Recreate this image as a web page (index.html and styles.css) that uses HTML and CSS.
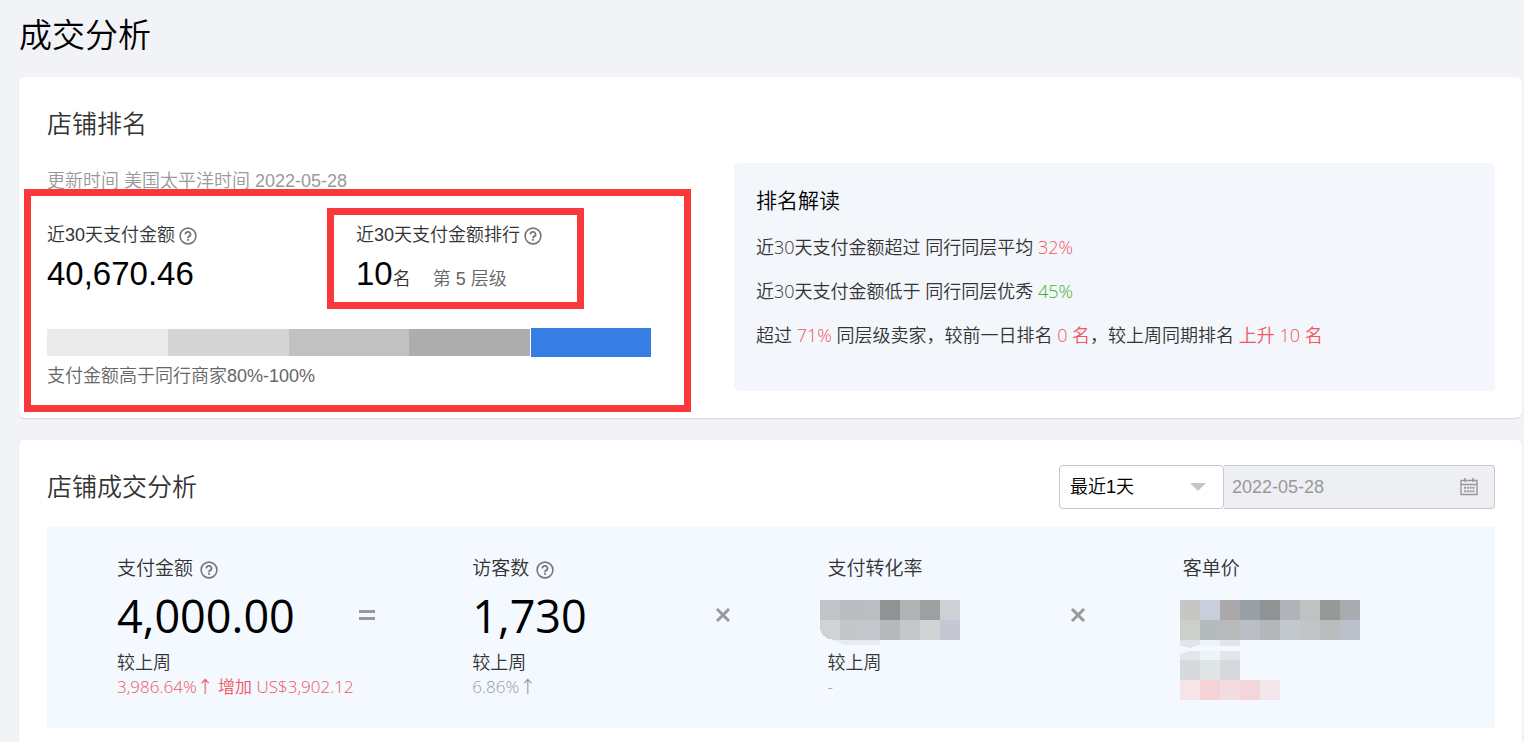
FILE: index.html
```html
<!DOCTYPE html>
<html lang="zh-CN">
<head>
  <meta charset="UTF-8">
  <meta name="viewport" content="width=device-width, initial-scale=1.0">
  <title>成交分析</title>
  <link rel="stylesheet" href="styles.css">
</head>
<body>
  <!-- Shared icon -->
  <svg class="sprite" aria-hidden="true">
    <symbol id="icon-help" viewBox="0 0 18 18">
      <circle cx="9" cy="9" r="7.9" fill="none" stroke="currentColor" stroke-width="1.6"/>
      <path d="M6.5 7.4a2.5 2.4 0 1 1 3.7 2C9.3 9.9 9 10.2 9 11.2" fill="none" stroke="currentColor" stroke-width="1.8"/>
      <rect x="8.1" y="12" width="1.8" height="1.8" fill="currentColor"/>
    </symbol>
  </svg>

  <h1 class="page-title">成交分析</h1>

  <!-- Shop ranking -->
  <section class="card ranking">
    <h2 class="card-title">店铺排名</h2>
    <div class="ranking-body">
      <div class="ranking-left">
        <p class="update-time">更新时间 美国太平洋时间 2022-05-28</p>
        <div class="rank-box">
          <div class="stats">
            <div class="stat">
              <div class="stat-label">近30天支付金额<svg class="help"><use href="#icon-help"/></svg></div>
              <div class="stat-value">40,670.46</div>
            </div>
            <div class="stat stat-marked">
              <div class="stat-label">近30天支付金额排行<svg class="help"><use href="#icon-help"/></svg></div>
              <div class="stat-value">10<span class="unit">名</span><span class="tier">第 5 层级</span></div>
            </div>
          </div>
          <div class="level-bar">
            <span class="level level-1"></span>
            <span class="level level-2"></span>
            <span class="level level-3"></span>
            <span class="level level-4"></span>
            <span class="level level-5"></span>
          </div>
          <p class="level-text">支付金额高于同行商家80%-100%</p>
        </div>
      </div>
      <div class="insight">
        <h3 class="insight-title">排名解读</h3>
        <p>近30天支付金额超过 同行同层平均 <span class="up">32%</span></p>
        <p>近30天支付金额低于 同行同层优秀 <span class="down">45%</span></p>
        <p>超过 <span class="up">71%</span> 同层级卖家，较前一日排名 <span class="up">0 名</span>，较上周同期排名 <span class="up">上升 10 名</span></p>
      </div>
    </div>
  </section>

  <!-- Shop transactions -->
  <section class="card deals">
    <div class="card-head">
      <h2 class="card-title">店铺成交分析</h2>
      <div class="filters">
        <div class="select-wrap">
          <select class="range" aria-label="统计周期">
            <option>最近1天</option>
          </select>
          <svg class="caret" viewBox="0 0 16 8"><path d="M0 0h16L8 8z" fill="#c4c6c8"/></svg>
        </div>
        <div class="date-wrap">
          <input class="date" type="text" value="2022-05-28" aria-label="统计日期" disabled>
          <svg class="calendar" viewBox="0 0 18 18" fill="none" stroke="#999">
            <path d="M1 2.5h16v14H1zM1 6.5h16" stroke-width="1.4"/>
            <path d="M5 0v4M13 0v4" stroke-width="1.6"/>
            <path d="M4 9.8h10.5M4 13.2h10.5" stroke-width="2" stroke-dasharray="2 0.8"/>
          </svg>
        </div>
      </div>
    </div>

    <div class="metrics">
      <div class="metric">
        <div class="metric-label">支付金额<svg class="help"><use href="#icon-help"/></svg></div>
        <div class="metric-value">4,000.00</div>
        <div class="metric-compare">较上周</div>
        <div class="metric-change up">3,986.64%↑ 增加 US$3,902.12</div>
        <svg class="operator" viewBox="0 0 18 18"><path d="M1 5.5h16M1 12.5h16"/></svg>
      </div>
      <div class="metric">
        <div class="metric-label">访客数<svg class="help"><use href="#icon-help"/></svg></div>
        <div class="metric-value">1,730</div>
        <div class="metric-compare">较上周</div>
        <div class="metric-change">6.86%↑</div>
        <svg class="operator" viewBox="0 0 18 18"><path d="M3 3l12 12M15 3L3 15"/></svg>
      </div>
      <div class="metric">
        <div class="metric-label">支付转化率</div>
        <div class="metric-value">
          <svg class="mosaic mosaic-rate" viewBox="0 0 140 45">
            <path d="M0 0h20v40h-6Q0 38 0 26z" fill="#cfd3d5"/>
            <path d="M0 0h20v20H0z" fill="#c1c4c6"/>
            <path d="M20 0h20v20H20z" fill="#b8bebf"/>
            <path d="M40 0h20v20H40z" fill="#bbbec0"/>
            <path d="M60 0h20v20H60z" fill="#919293"/>
            <path d="M80 0h20v20H80z" fill="#b0b2b3"/>
            <path d="M100 0h20v20h-20z" fill="#9d9fa1"/>
            <path d="M120 0h20v20h-20z" fill="#cdd1d4"/>
            <path d="M20 20h20v20H20z" fill="#c3c7c9"/>
            <path d="M40 20h20v20H40z" fill="#c4c7cb"/>
            <path d="M60 20h20v20H60z" fill="#b6babc"/>
            <path d="M80 20h20v20H80z" fill="#c4c8cc"/>
            <path d="M100 20h20v20h-20z" fill="#d1d3d5"/>
            <path d="M120 20h20v20h-20z" fill="#c5c8d2"/>
            <path d="M12 40h48v5H24z" fill="#e6ecf0"/>
          </svg>
        </div>
        <div class="metric-compare">较上周</div>
        <div class="metric-change">-</div>
        <svg class="operator" viewBox="0 0 18 18"><path d="M3 3l12 12M15 3L3 15"/></svg>
      </div>
      <div class="metric">
        <div class="metric-label">客单价</div>
        <svg class="mosaic mosaic-price" viewBox="0 0 180 100">
          <path d="M0 0h20v20H0z" fill="#c6c7c4"/>
          <path d="M20 0h20v20H20z" fill="#c9ceda"/>
          <path d="M40 0h20v20H40z" fill="#aaa8a9"/>
          <path d="M60 0h20v20H60z" fill="#98a0a5"/>
          <path d="M80 0h20v20H80z" fill="#8f9394"/>
          <path d="M100 0h20v20h-20z" fill="#b0b3b8"/>
          <path d="M120 0h20v20h-20z" fill="#bfc1c3"/>
          <path d="M140 0h20v20h-20z" fill="#979898"/>
          <path d="M160 0h20v20h-20z" fill="#a8acaf"/>
          <path d="M0 20h20v20H0z" fill="#cdcfcd"/>
          <path d="M20 20h20v20H20z" fill="#b5babd"/>
          <path d="M40 20h20v20H40z" fill="#b9babb"/>
          <path d="M60 20h20v20H60z" fill="#b9bfc4"/>
          <path d="M80 20h20v20H80z" fill="#b4b8ba"/>
          <path d="M100 20h20v20h-20z" fill="#c4c9cd"/>
          <path d="M120 20h20v20h-20z" fill="#c2c4c5"/>
          <path d="M140 20h20v20h-20z" fill="#bbbcbe"/>
          <path d="M160 20h20v20h-20z" fill="#bbc0ca"/>
          <path d="M0 40h20v5l-10 3-10-2zM0 54l10-3h10v9H0zM40 40h20v6H40zM40 51h20v9H40z" fill="#e2e6ea"/>
          <path d="M20 40h20v6H20zM20 51h20v9H20z" fill="#eef3f7"/>
          <path d="M0 60h20v20H0z" fill="#d6dadc"/>
          <path d="M20 60h20v20H20z" fill="#dfe4e6"/>
          <path d="M40 60h20v20H40z" fill="#d5d8dd"/>
          <path d="M0 80h20v20H0z" fill="#f5e4e8"/>
          <path d="M20 80h20v20H20z" fill="#f5d2d5"/>
          <path d="M40 80h20v20H40z" fill="#f4dde1"/>
          <path d="M60 80h20v20H60z" fill="#f4d5d9"/>
          <path d="M80 80h20v20H80z" fill="#f3e6eb"/>
        </svg>
      </div>
    </div>
  </section>
</body>
</html>
```
FILE: styles.css
```css
* {
  box-sizing: border-box;
}

body {
  margin: 0;
  padding: 14px 2px 0 19px;
  background: #f2f3f7;
  color: #333;
  font-family: "Liberation Sans", "Noto Sans CJK SC", sans-serif;
  font-size: 18px;
  font-weight: 350;
  line-height: 24px;
}

h1, h2, h3, p {
  margin: 0;
  font-weight: 350;
}

.sprite {
  display: none;
}

.page-title {
  margin-bottom: 19px;
  color: #000;
  font-size: 33px;
  line-height: 44px;
}

.card {
  margin-bottom: 22px;
  padding: 29px 27px 27px 28px;
  background: #fff;
  border-radius: 6px;
  box-shadow: 0 1px 1px #d3d6dc;
}

.card-title {
  font-size: 25px;
  line-height: 36px;
}

.up {
  color: #f15560;
}

.down {
  color: #46b01e;
}

.help {
  width: 18px;
  height: 18px;
  margin-left: 4px;
  color: #777;
  vertical-align: -4px;
}

/* Ranking */
.ranking-body {
  display: grid;
  grid-template-columns: 687fr 761fr;
  margin-top: 21px;
}

.update-time {
  padding-top: 6px;
  color: #999;
}

.rank-box {
  position: relative;
  margin-right: 83px;
  padding-top: 30px;
}

.rank-box::after,
.stat-marked::after {
  content: "";
  position: absolute;
  border: 7px solid #f9383c;
  pointer-events: none;
}

.rank-box::after {
  inset: -4px -40px -24px -23px;
}

.stats {
  display: grid;
  grid-template-columns: 309px 1fr;
}

.stat-marked {
  position: relative;
}

.stat-marked::after {
  inset: -15px 67px -10px -29px;
}

.stat-value {
  margin-top: 7px;
  color: #000;
  font-size: 33px;
  font-weight: 400;
  line-height: 40px;
}

.unit,
.tier {
  font-size: 18px;
  font-weight: 350;
}

.unit {
  color: #333;
}

.tier {
  margin-left: 22px;
  color: #666;
}

.level-bar {
  display: grid;
  grid-template-columns: repeat(5, 1fr);
  height: 27px;
  margin-top: 30px;
}

.level-1 { background: #eaeaea; }
.level-2 { background: #d5d5d5; }
.level-3 { background: #c1c1c1; }
.level-4 { background: #adadad; }

.level-5 {
  margin: -1px 0 -1px 1px;
  background: #367ee4;
}

.level-text {
  margin-top: 8px;
  color: #666;
}

.insight {
  min-height: 228px;
  padding: 22px;
  background: #f3f6fb;
  border-radius: 5px;
  font-family: "Open Sans", "Noto Sans CJK SC", sans-serif;
}

.insight-title {
  margin-bottom: 20px;
  color: #000;
  font-size: 21px;
  line-height: 30px;
}

.insight p {
  margin-bottom: 20px;
}

/* Transactions */
.deals {
  padding-top: 25px;
}

.card-head {
  display: flex;
  justify-content: space-between;
  align-items: center;
  margin-bottom: 18px;
}

.filters {
  display: flex;
}

.select-wrap,
.date-wrap {
  position: relative;
}

.range,
.date {
  display: block;
  height: 44px;
  padding: 0 10px;
  border: 1px solid #c4c6cf;
  border-radius: 4px;
  font: inherit;
}

.range {
  width: 165px;
  appearance: none;
  background: #fff;
  color: #000;
}

.date {
  width: 271px;
  padding: 0 8px;
  border-left: 0;
  border-radius: 0 4px 4px 0;
  background: #eeeff3;
  color: #999;
}

.caret,
.calendar {
  position: absolute;
  pointer-events: none;
}

.caret {
  top: 18px;
  right: 18px;
  width: 16px;
  height: 8px;
}

.calendar {
  top: 13px;
  right: 17px;
  width: 18px;
  height: 18px;
}

.metrics {
  display: grid;
  grid-template-columns: repeat(4, 1fr);
  min-height: 201px;
  padding: 29px 0 26px 27px;
  background: #f3f9fe;
  font-family: "Open Sans", "Noto Sans CJK SC", sans-serif;
}

.metric {
  position: relative;
  padding-left: 43px;
}

.metric-label {
  font-size: 19px;
}

.metric-label .help {
  margin-left: 7px;
}

.metric-value {
  display: flex;
  height: 64px;
  margin: 4px 0 1px;
  color: #000;
  font-size: 45px;
  font-weight: 400;
  line-height: 64px;
}

.metric-compare {
  line-height: 26px;
}

.metric-change {
  font-size: 17px;
  white-space: nowrap;
}

.metric-change:not(.up) {
  color: #999;
}

.operator {
  position: absolute;
  top: 50px;
  right: 53px;
  width: 18px;
  height: 18px;
  fill: none;
  stroke: #999;
  stroke-width: 3;
}

.mosaic {
  display: block;
  shape-rendering: crispEdges;
}

.mosaic-rate {
  width: 140px;
  height: 45px;
  margin: 16px 0 0 -8px;
}

.mosaic-price {
  width: 180px;
  height: 100px;
  margin: 20px 0 0 -3px;
}
```
